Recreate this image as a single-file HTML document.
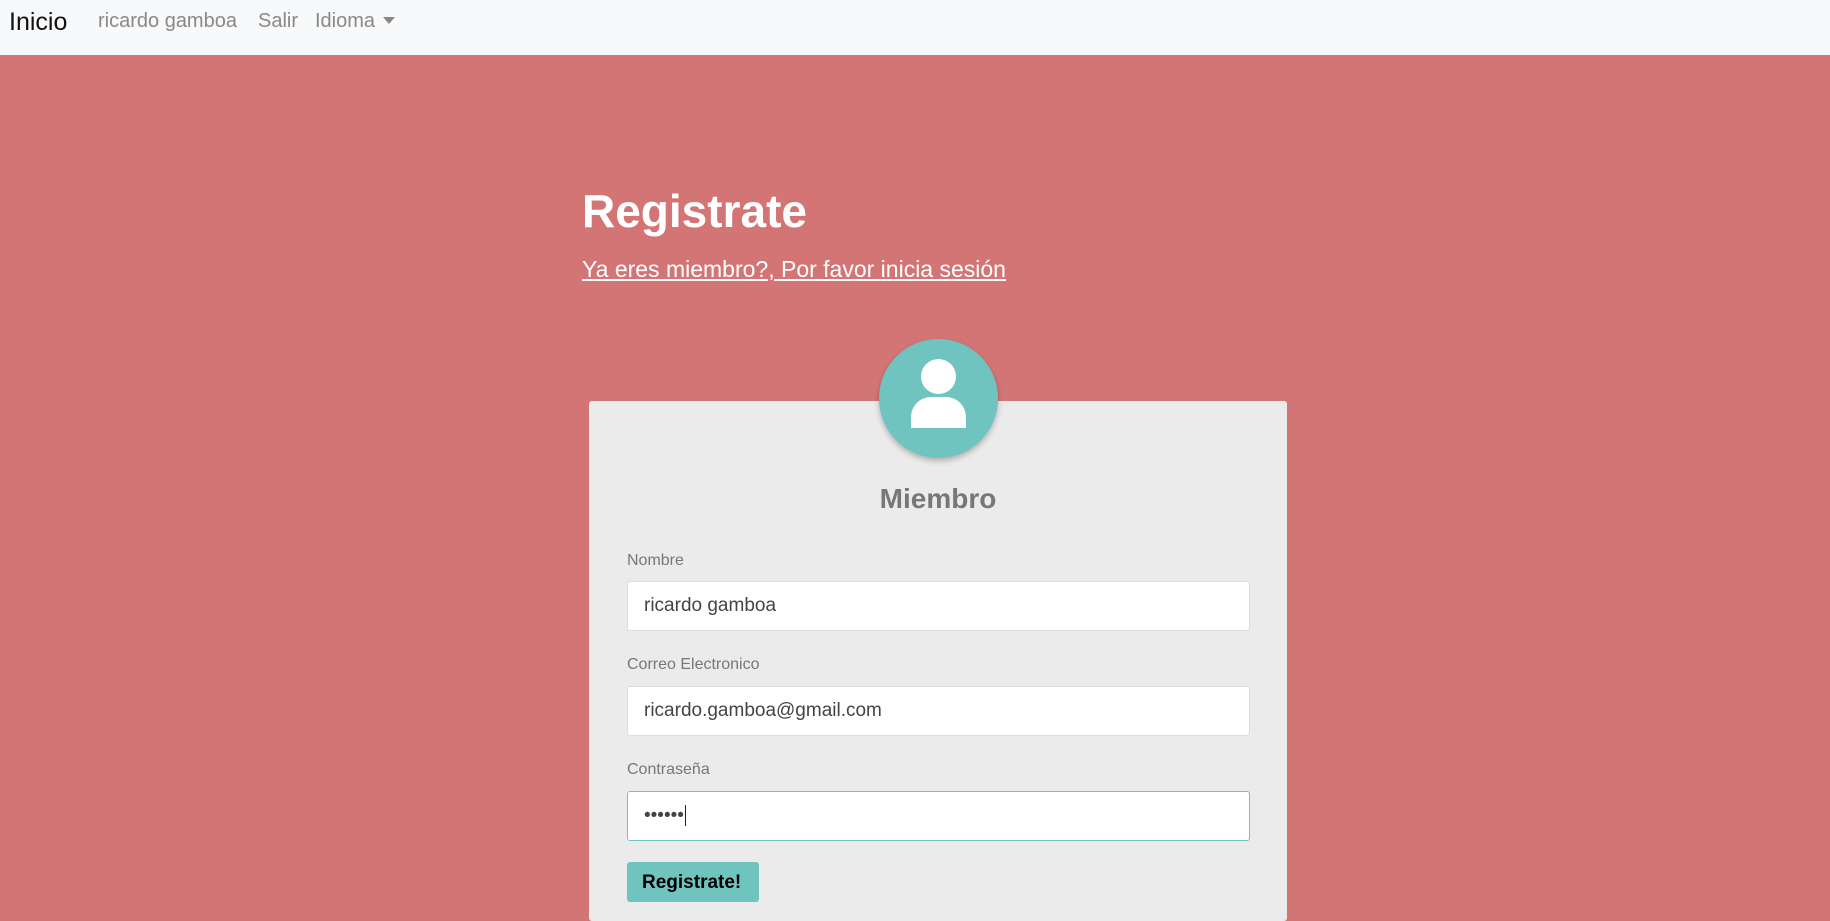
<!DOCTYPE html>
<html><head><meta charset="utf-8"><style>
*{box-sizing:border-box;margin:0;padding:0}
body{width:1830px;height:882px;overflow:hidden;background:#d37575;font-family:"Liberation Sans",sans-serif;position:relative}
.nav{position:absolute;left:0;top:0;width:1830px;height:55px;background:#f8f9fa}
.nav span{position:absolute;top:10px;font-size:20px;color:#888}
.brand{left:9px;font-size:25px!important;color:#111!important;top:8px!important}
.caret{display:inline-block;width:0;height:0;border-left:6px solid transparent;border-right:6px solid transparent;border-top:7px solid #888;margin-left:8px;vertical-align:3px}
h1{position:absolute;left:582px;top:184px;font-size:46px;color:#fff;font-weight:bold}
.lnk{position:absolute;left:582px;top:256px;font-size:23px;color:#fff;text-decoration:underline}
.card{position:absolute;left:589px;top:401px;width:698px;height:520px;background:#ebebeb;border-radius:3px}
.av{position:absolute;left:879px;top:339px;width:119px;height:119px;border-radius:50%;background:#70c4bf;box-shadow:0 3px 6px rgba(0,0,0,.25)}
.head{position:absolute;left:42px;top:20px;width:35px;height:35px;border-radius:50%;background:#fff}
.body{position:absolute;left:32px;top:58px;width:55px;height:31px;background:#fff;border-radius:20px 20px 0 0}
.mb{position:absolute;left:589px;width:698px;top:483px;text-align:center;font-size:28px;font-weight:bold;color:#777}
.lb{position:absolute;left:627px;font-size:16px;color:#777}
.in{position:absolute;left:627px;width:623px;height:50px;background:#fff;border:1px solid #ddd;border-radius:3px;font-size:19px;color:#444;padding:13px 16px}
.btn{position:absolute;left:627px;top:862px;width:132px;height:40px;background:#70c4bf;border-radius:3px;font-size:19px;font-weight:bold;padding:10px 15px}
</style></head><body>
<div class="nav"><span class="brand">Inicio</span><span style="left:98px">ricardo gamboa</span><span style="left:258px">Salir</span><span style="left:315px">Idioma<i class="caret"></i></span></div>
<h1>Registrate</h1>
<div class="lnk">Ya eres miembro?, Por favor inicia sesión</div>
<div class="card"></div>
<div class="av"><div class="head"></div><div class="body"></div></div>
<div class="mb">Miembro</div>
<div class="lb" style="top:552px">Nombre</div>
<div class="in" style="top:581px">ricardo gamboa</div>
<div class="lb" style="top:656px">Correo Electronico</div>
<div class="in" style="top:686px">ricardo.gamboa@gmail.com</div>
<div class="lb" style="top:761px">Contraseña</div>
<div class="in" style="top:791px;border-color:#70c4bf">••••••<span style="border-left:1px solid #222;margin-left:1px"></span></div>
<div class="btn">Registrate!</div>
</body></html>
